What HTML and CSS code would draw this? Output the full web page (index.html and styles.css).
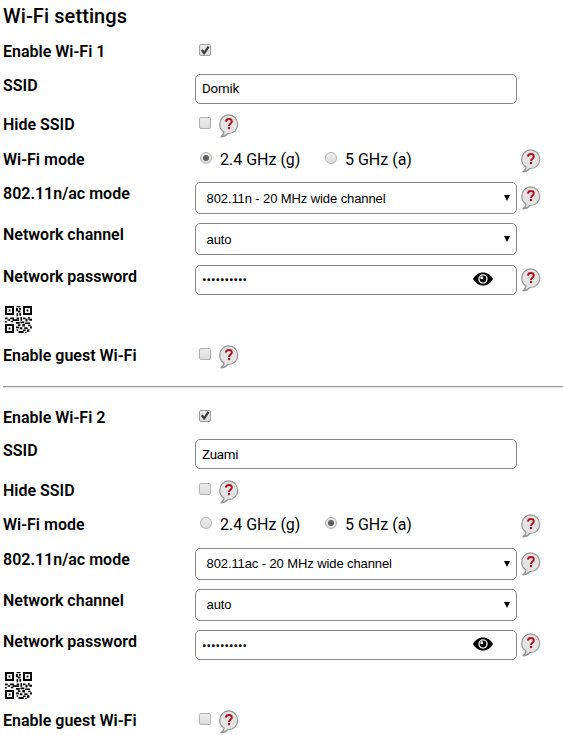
FILE: index.html
```html
<!DOCTYPE html>
<html lang="en">
<head>
  <meta charset="UTF-8">
  <meta name="viewport" content="width=device-width, initial-scale=1.0">
  <title>Wi-Fi settings</title>
  <link rel="stylesheet" href="styles.css">
</head>
<body>
  <!-- Shared icons -->
  <svg class="sprite" aria-hidden="true">
    <symbol id="icon-help" viewBox="0 0 20 24">
      <path d="M5 17.900C2.300 16.300.7 13.500.7 10.200.7 5 4.700.8 9.700.8s9 4.200 9 9.400-4 9.300-9 9.300h-.8c-1.700 2-4 3.300-7.300 3.500 2-1.200 3.200-2.800 3.400-5.100z" fill="#e4e4e4" stroke="#969696" stroke-width="1.200"/>
      <path d="M6.900 7.600C7.100 5.800 8.200 5 9.900 5c1.900 0 2.900.9 2.900 2.400 0 2.200-2.800 2.300-2.800 4.500" fill="none" stroke="#b0121f" stroke-width="2"/>
      <path d="M8.900 13h2.200v2.100H8.900z" fill="#b0121f"/>
    </symbol>
    <symbol id="icon-eye" viewBox="0 0 20 14">
      <path d="M0 7C2.200 3 5.700.5 10 .5S17.800 3 20 7c-2.200 4-5.700 6.500-10 6.500S2.200 11 0 7z"/>
      <circle cx="10" cy="7" r="4.700" fill="#fff"/>
      <circle cx="10" cy="7" r="3.400"/>
      <circle cx="8.800" cy="5.800" r="1.500" fill="#fff"/>
    </symbol>
    <symbol id="icon-qr" viewBox="0 0 21 21">
      <path fill-rule="evenodd" d="M0 0h7v7H0zM1.500 1.500v4h4v-4zM14 0h7v7h-7zM15.500 1.500v4h4v-4zM0 14h7v7H0zM1.500 15.500v4h4v-4z"/>
      <path d="M2.800 2.800h1.400v1.400H2.800zM16.800 2.800h1.400v1.400h-1.400zM2.800 16.800h1.400v1.400H2.800z"/>
      <path d="M9 0h3v1H9zM8.500 1.500H10V4H8.500zM10 3.500h2V5h-2zM11 1.500h1.500V3H11zM9 5.500h1.200V8H9zM11.200 5.500h1.300v2h-1.300z"/>
      <path d="M0 9h2v1.300H0zM2 10.300h2v1.200H2zM4 9h3v1.300H4zM6 10.300h5v1.300H6zM9 9h2v1.200H9zM12 8.500h1.300v3H12zM14 9h2v1.300h-2zM16 10h1.500v2H16zM18 8.500h1.200v2H18zM19 10h2v1.500h-2zM0 11.600h1.300v1.200H0zM4.500 11.500h2v1.200h-2z"/>
      <path d="M8.500 12.500h3v1.300h-3zM12 12h3v1.500h-3zM15.500 12.800h4v1.200h-4zM10 14.200h2v1.300h-2zM13.500 14h2v2h-2zM18 14.500h2v1.300h-2zM8.500 16h2.500v1.300H8.500zM11.500 16.500h2V18h-2zM15 16.500h2.500v1.300H15zM19.500 16h1.500v1.500h-1.500zM9 18h1.300v1.300H9zM10.500 19.500h4V21h-4zM14 18.200h2v1.300h-2zM17 18h2v2h-2zM15.500 20h1.300v1h-1.300z"/>
    </symbol>
  </svg>

  <form class="settings">
    <h2 class="settings__title">Wi-Fi settings</h2>

    <section class="network">
      <div class="row row--enable">
        <label class="row__label" for="enable1">Enable Wi-Fi 1</label>
        <input type="checkbox" id="enable1" class="check" checked>
      </div>
      <div class="row row--ssid">
        <label class="row__label" for="ssid1">SSID</label>
        <input type="text" id="ssid1" class="field" value="Domik">
      </div>
      <div class="row row--hide">
        <label class="row__label" for="hide1">Hide SSID</label>
        <input type="checkbox" id="hide1" class="check">
        <svg class="help"><use href="#icon-help"/></svg>
      </div>
      <div class="row row--mode">
        <span class="row__label">Wi-Fi mode</span>
        <div class="modes">
          <label class="mode"><input type="radio" name="mode1" class="radio" checked>2.4 GHz (g)</label>
          <label class="mode"><input type="radio" name="mode1" class="radio">5 GHz (a)</label>
        </div>
        <svg class="help"><use href="#icon-help"/></svg>
      </div>
      <div class="row row--width">
        <label class="row__label" for="width1">802.11n/ac mode</label>
        <div class="select">
          <select id="width1" class="field"><option>802.11n - 20 MHz wide channel</option></select>
        </div>
        <svg class="help"><use href="#icon-help"/></svg>
      </div>
      <div class="row row--channel">
        <label class="row__label" for="channel1">Network channel</label>
        <div class="select">
          <select id="channel1" class="field"><option>auto</option></select>
        </div>
      </div>
      <div class="row row--password">
        <label class="row__label" for="password1">Network password</label>
        <div class="password">
          <input type="password" id="password1" class="field" value="0123456789">
          <svg class="password__eye"><use href="#icon-eye"/></svg>
        </div>
        <svg class="help"><use href="#icon-help"/></svg>
      </div>
      <div class="row row--qr">
        <svg class="qr"><use href="#icon-qr"/></svg>
      </div>
      <div class="row row--guest">
        <label class="row__label" for="guest1">Enable guest Wi-Fi</label>
        <input type="checkbox" id="guest1" class="check">
        <svg class="help"><use href="#icon-help"/></svg>
      </div>
    </section>

    <hr class="divider">

    <section class="network">
      <div class="row row--enable">
        <label class="row__label" for="enable2">Enable Wi-Fi 2</label>
        <input type="checkbox" id="enable2" class="check" checked>
      </div>
      <div class="row row--ssid">
        <label class="row__label" for="ssid2">SSID</label>
        <input type="text" id="ssid2" class="field" value="Zuami">
      </div>
      <div class="row row--hide">
        <label class="row__label" for="hide2">Hide SSID</label>
        <input type="checkbox" id="hide2" class="check">
        <svg class="help"><use href="#icon-help"/></svg>
      </div>
      <div class="row row--mode">
        <span class="row__label">Wi-Fi mode</span>
        <div class="modes">
          <label class="mode"><input type="radio" name="mode2" class="radio">2.4 GHz (g)</label>
          <label class="mode"><input type="radio" name="mode2" class="radio" checked>5 GHz (a)</label>
        </div>
        <svg class="help"><use href="#icon-help"/></svg>
      </div>
      <div class="row row--width">
        <label class="row__label" for="width2">802.11n/ac mode</label>
        <div class="select">
          <select id="width2" class="field"><option>802.11ac - 20 MHz wide channel</option></select>
        </div>
        <svg class="help"><use href="#icon-help"/></svg>
      </div>
      <div class="row row--channel">
        <label class="row__label" for="channel2">Network channel</label>
        <div class="select">
          <select id="channel2" class="field"><option>auto</option></select>
        </div>
      </div>
      <div class="row row--password">
        <label class="row__label" for="password2">Network password</label>
        <div class="password">
          <input type="password" id="password2" class="field" value="0123456789">
          <svg class="password__eye"><use href="#icon-eye"/></svg>
        </div>
        <svg class="help"><use href="#icon-help"/></svg>
      </div>
      <div class="row row--qr">
        <svg class="qr"><use href="#icon-qr"/></svg>
      </div>
      <div class="row row--guest">
        <label class="row__label" for="guest2">Enable guest Wi-Fi</label>
        <input type="checkbox" id="guest2" class="check">
        <svg class="help"><use href="#icon-help"/></svg>
      </div>
    </section>
  </form>
</body>
</html>
```

FILE: styles.css
```css
* {
  box-sizing: border-box;
}

html {
  overflow: hidden;
}

body {
  margin: 0;
  background: #fff;
  color: #000;
  font-family: Roboto, "Liberation Sans", sans-serif;
  font-size: 16px;
}

.sprite {
  display: none;
}

.settings {
  padding-left: 3px;
}

.settings__title {
  height: 41.4px;
  margin: 0;
  padding-top: 4px;
  font-size: 20px;
  font-weight: 500;
  letter-spacing: 0.1px;
  line-height: 24px;
}

/* Rows */
.row {
  display: flex;
  align-items: flex-start;
}

.row__label {
  width: 192px;
  font-weight: 600;
  line-height: 20px;
}

.row--enable { height: 32.4px; }
.row--ssid { height: 41.4px; }
.row--hide { height: 34.6px; }
.row--mode { height: 32.5px; }
.row--width { height: 41px; }
.row--channel { height: 41.5px; }
.row--password { height: 41.6px; }
.row--qr { height: 39.6px; }
.row--guest { height: 40px; }

.row--enable .row__label {
  padding-top: 1px;
}

.row--ssid .row__label,
.row--width .row__label,
.row--channel .row__label,
.row--password .row__label {
  padding-top: 2px;
}

/* Fields */
.field {
  display: block;
  width: 322px;
  height: 30px;
  margin: 0;
  padding: 0 6px;
  border: 1px solid #888;
  border-radius: 5px;
  outline: none;
  background: #fff;
  color: #000;
  font-family: Roboto, "Liberation Sans", sans-serif;
  font-size: 13.33px;
}

.row--ssid .field {
  letter-spacing: -0.2px;
}

.select,
.password {
  position: relative;
}

.select .field {
  height: 32px;
  padding: 0 10.5px;
  appearance: none;
  font-family: "Liberation Sans", Arial, sans-serif;
  font-size: 13px;
  letter-spacing: -0.1px;
}

.select::after {
  content: "";
  position: absolute;
  top: 13px;
  right: 7px;
  border: 3px solid transparent;
  border-top: 6px solid #000;
  border-bottom: 0;
}

.password__eye {
  position: absolute;
  top: 7px;
  right: 24px;
  width: 20px;
  height: 14px;
}

/* Checkboxes and radios */
.check,
.radio {
  flex: none;
  width: 12px;
  height: 12px;
  margin: 2.2px 4px 0;
  appearance: none;
  border: 1px solid #b2b2b2;
  border-radius: 2px;
  background: linear-gradient(#ededed, #dcdcdc);
}

.row--enable .check {
  margin-top: 3px;
}

.row--guest .check {
  margin-top: 2px;
}

.check:checked {
  border-color: #a0a0a0;
}

.check:checked::after {
  content: "";
  display: block;
  width: 10px;
  height: 10px;
  background: #404040;
  clip-path: polygon(8% 52%, 26% 38%, 42% 56%, 76% 6%, 96% 18%, 46% 90%, 36% 90%);
}

.radio {
  margin: 2px 8px 0 5px;
  border-radius: 50%;
}

.radio:checked::after {
  content: "";
  display: block;
  width: 6px;
  height: 6px;
  margin: 2px;
  border-radius: 50%;
  background: #606060;
}

.modes {
  display: flex;
  width: 322px;
}

.mode {
  display: flex;
  width: 125px;
  line-height: 20px;
}

/* Icons */
.help {
  flex: none;
  width: 20px;
  height: 24px;
  margin: 3px 0 0 4.4px;
}

.row--width .help {
  margin-top: 4px;
}

.row--hide .help,
.row--guest .help,
.row--mode .help {
  margin-top: -1px;
}

.qr {
  width: 27px;
  height: 27px;
  margin-left: 2px;
}

.divider {
  height: 2px;
  margin: 0 0 18.8px;
  border: 0;
  border-top: 1px solid #999;
  border-bottom: 1px solid #e4e4e4;
}
```
